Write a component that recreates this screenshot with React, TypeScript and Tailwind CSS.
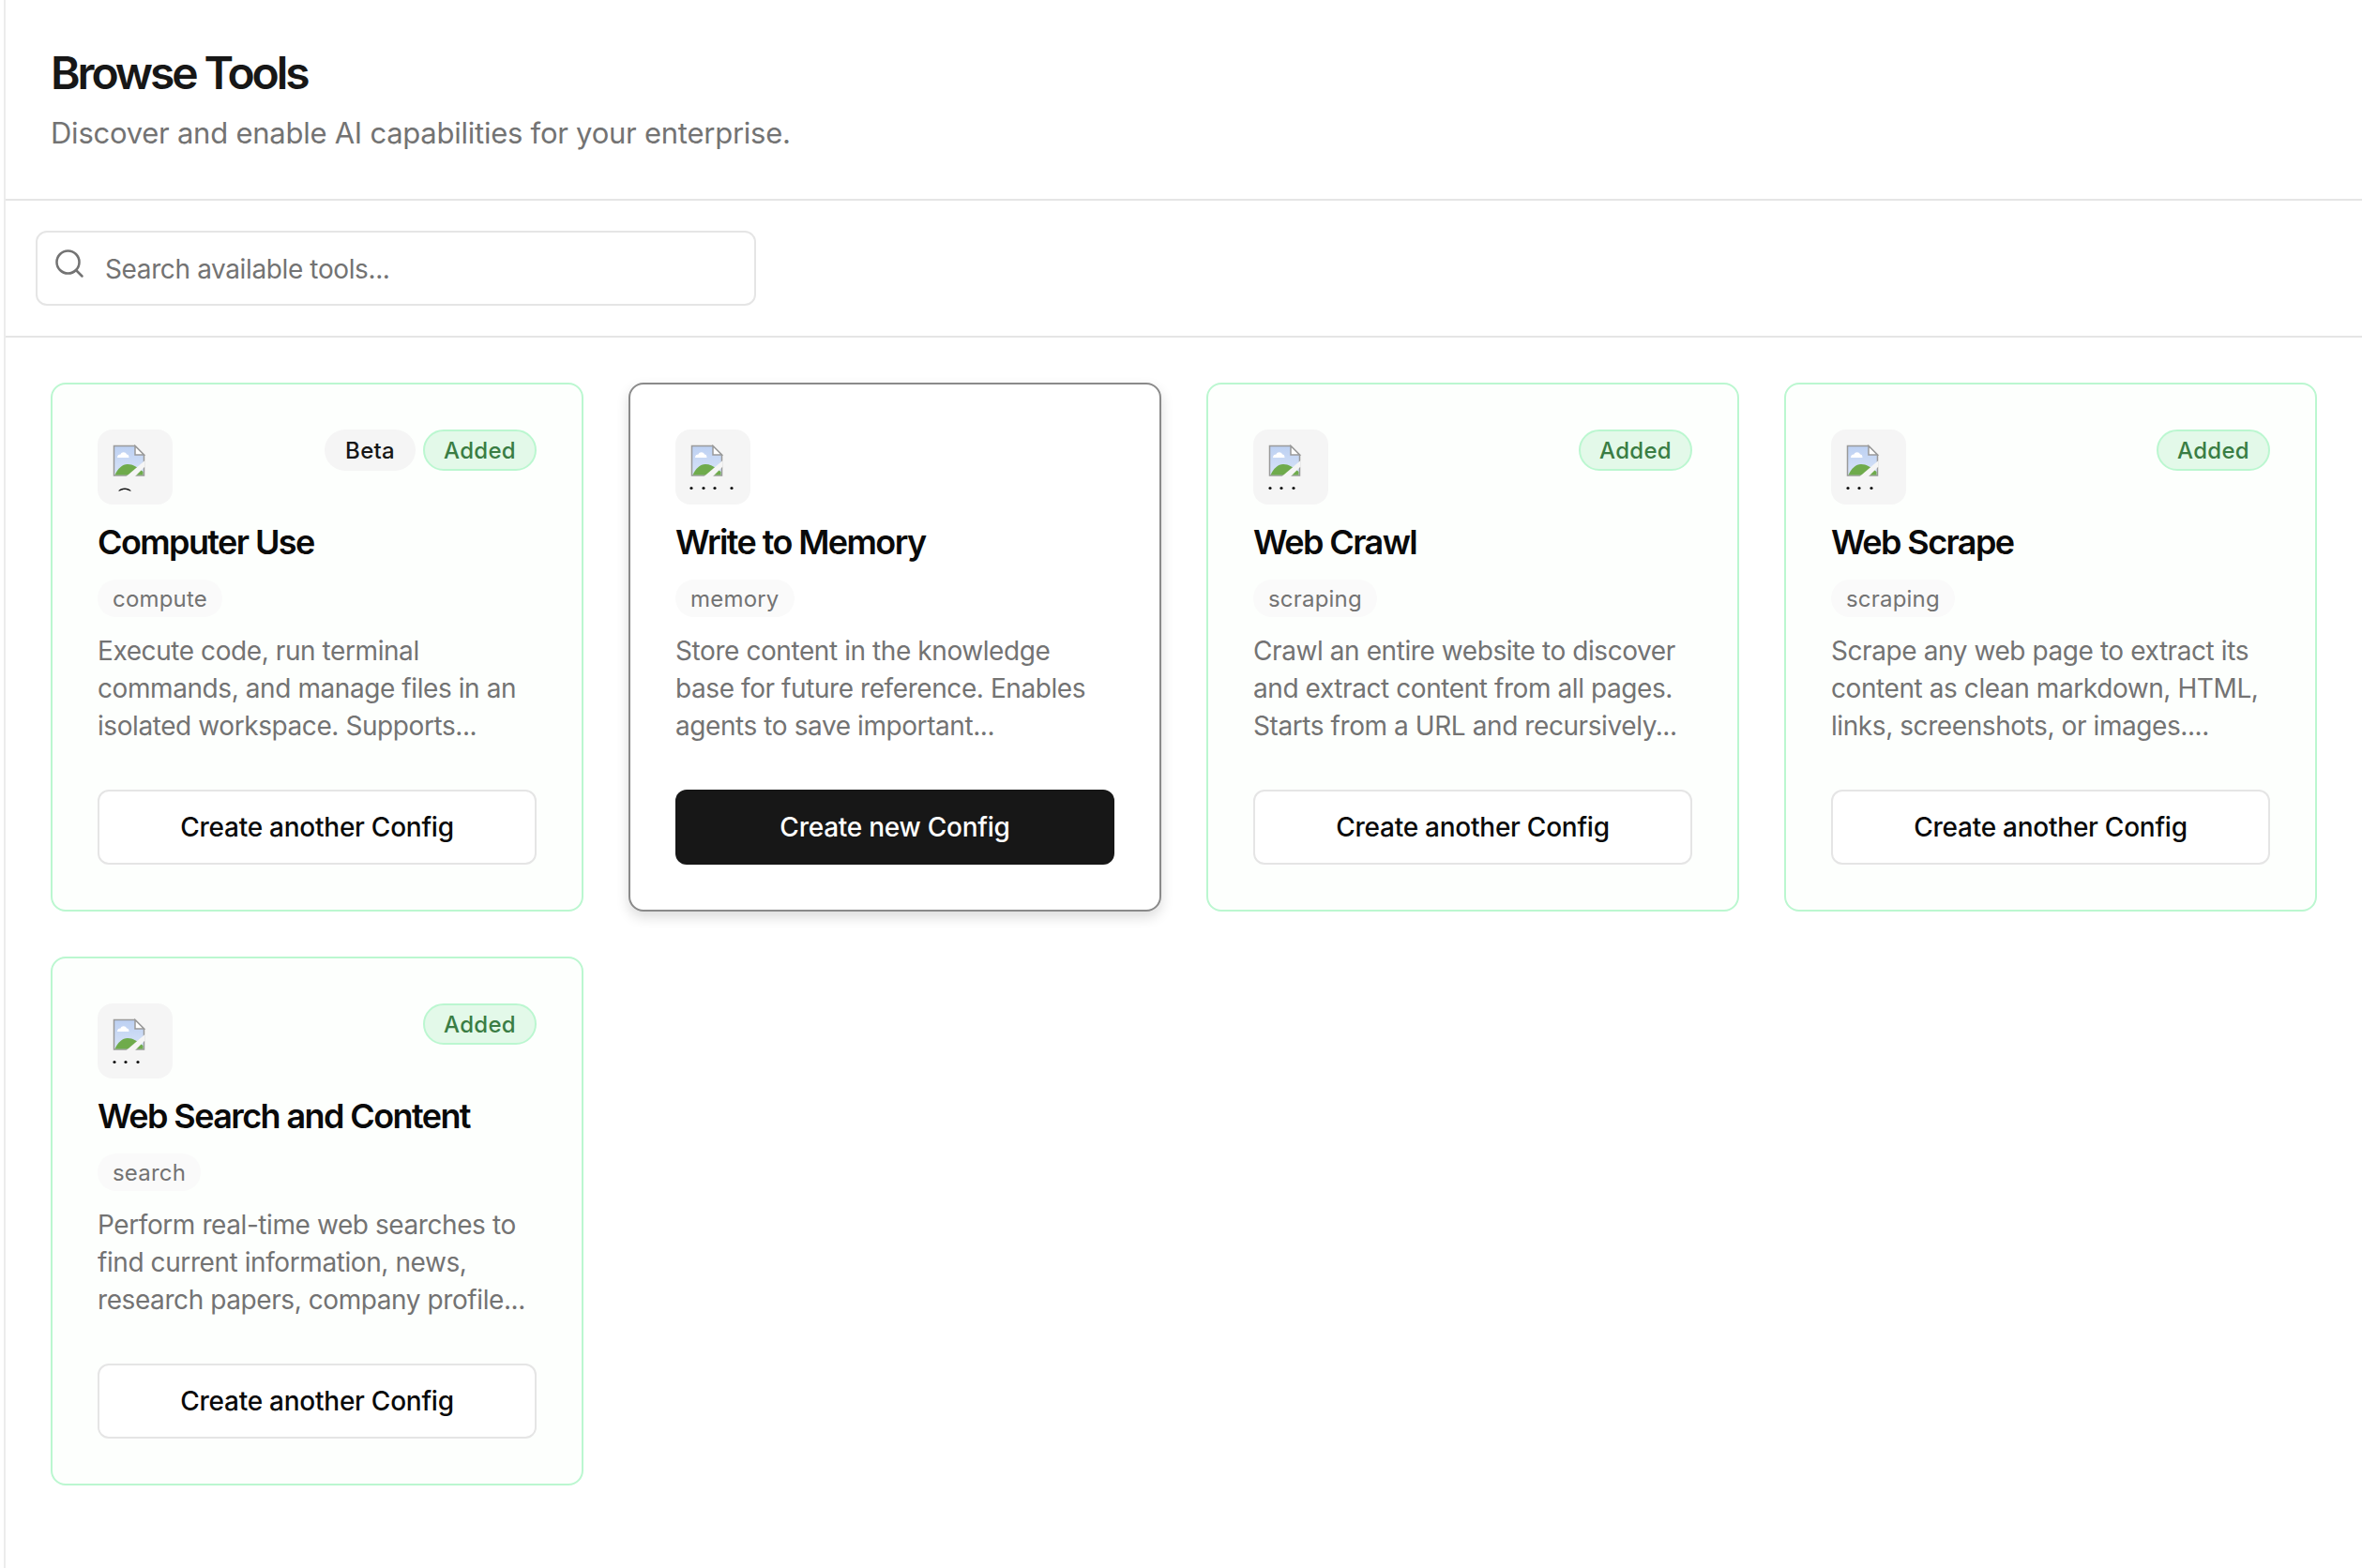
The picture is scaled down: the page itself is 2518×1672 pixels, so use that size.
import { Search } from "lucide-react";

const sans = "font-['Inter','Liberation_Sans',sans-serif]";

type Tool = {
  name: string;
  tag: string;
  description: string;
  beta?: boolean;
  added?: boolean;
  // x positions of what is left of the clipped alt text
  dots: number[];
  arc?: boolean;
};

const tools: Tool[] = [
  {
    name: "Computer Use",
    tag: "compute",
    description: "Execute code, run terminal commands, and manage files in an isolated workspace. Supports...",
    beta: true,
    added: true,
    dots: [],
    arc: true,
  },
  {
    name: "Write to Memory",
    tag: "memory",
    description: "Store content in the knowledge base for future reference. Enables agents to save important...",
    dots: [17, 30, 42, 60],
  },
  {
    name: "Web Crawl",
    tag: "scraping",
    description: "Crawl an entire website to discover and extract content from all pages. Starts from a URL and recursively...",
    added: true,
    dots: [18, 30, 43],
  },
  {
    name: "Web Scrape",
    tag: "scraping",
    description: "Scrape any web page to extract its content as clean markdown, HTML, links, screenshots, or images....",
    added: true,
    dots: [18, 30, 43],
  },
  {
    name: "Web Search and Content",
    tag: "search",
    description: "Perform real-time web searches to find current information, news, research papers, company profile...",
    added: true,
    dots: [18, 30, 43],
  },
];

function BrokenImage({ dots, arc }: { dots: number[]; arc?: boolean }) {
  return (
    <svg width="80" height="80" viewBox="0 0 80 80" className="block">
      <defs>
        <linearGradient id="sky" x1="0" y1="0" x2="0" y2="1">
          <stop offset="0" stopColor="#bcd0f2" />
          <stop offset="1" stopColor="#d9e4f8" />
        </linearGradient>
      </defs>
      <path d="M17.500 17.500h22.500l9.500 9.500v22h-32z" fill="url(#sky)" stroke="#9a9a9a" strokeWidth="1.500" />
      <path d="M40 17.500v9.500h9.500z" fill="#fff" stroke="#9a9a9a" strokeWidth="1.500" />
      <path d="M21 30c0-2.500 1.500-3.500 3.500-3.500 1-3 5.500-3 6.500 0 1.500 0 2.500 1 2.500 3.500z" fill="#fff" />
      <path d="M18.500 48.500c3-7 8-11.500 13.500-11.500 6 0 10 3 16.500 8v3.500z" fill="#6fab4c" />
      <path d="M50.500 33v6.500L39.500 50.500h-9.500z" fill="#f5f5f5" />
      {arc && <path d="M22 65.500c3-4 11-4 14 0l-2 0c-3-2-7-2-10 0z" fill="#111" />}
      {dots.map((x) => (
        <circle key={x} cx={x} cy="62.500" r="1.600" fill="#111" />
      ))}
    </svg>
  );
}

function ToolCard({ tool }: { tool: Tool }) {
  const cardTone = tool.added
    ? "border-[#bbf7d0] bg-[#fdfffd]"
    : "border-[#8a8a8a] bg-white shadow-[0_6px_14px_rgba(0,0,0,0.14)]";

  return (
    <div className={`rounded-2xl border-2 p-12 ${cardTone}`}>
      <div className="flex items-start justify-between">
        <div className="size-20 overflow-hidden rounded-2xl bg-[#f5f5f5]">
          <BrokenImage dots={tool.dots} arc={tool.arc} />
        </div>
        <div className="flex gap-2">
          {tool.beta && (
            <span className="rounded-full border-2 border-transparent bg-[#f5f5f5] px-5 pt-[5px] pb-[3px] text-2xl leading-8 font-medium tracking-[0.3px] text-[#171717]">
              Beta
            </span>
          )}
          {tool.added && (
            <span className="rounded-full border-2 border-[#bbf7d0] bg-[#e3f9e9] px-5 pt-[5px] pb-[3px] text-2xl leading-8 font-medium tracking-[0.3px] text-[#3a7d44]">
              Added
            </span>
          )}
        </div>
      </div>
      <h3 className="mt-3 text-4xl leading-14 font-semibold tracking-[-1.6px] text-[#0a0a0a]">{tool.name}</h3>
      <div className="mt-3 flex">
        <span className="rounded-full bg-[#fafafa] px-4 pt-[5px] pb-[3px] text-2xl leading-8 tracking-[0.2px] text-[#737373]">
          {tool.tag}
        </span>
      </div>
      <p className="mt-4 line-clamp-3 h-[120px] text-[28px] leading-10 tracking-[-0.42px] text-[#737373]">
        {tool.description}
      </p>
      <button
        className={
          tool.added
            ? "mt-12 flex h-20 w-full items-center justify-center rounded-xl border-2 border-[#e5e5e5] bg-white text-[28px] font-medium tracking-[-0.25px] text-[#0a0a0a]"
            : "mt-12 flex h-20 w-full items-center justify-center rounded-xl bg-[#171717] text-[28px] font-medium tracking-[-0.25px] text-white"
        }
      >
        {tool.added ? "Create another Config" : "Create new Config"}
      </button>
    </div>
  );
}

export default function App() {
  return (
    <div className={`ml-1 min-h-[1672px] border-l-2 border-[#ececec] bg-white ${sans}`}>
      <header className="border-b-2 border-[#e5e5e5] px-12 pt-[50px] pb-[46px]">
        <h1 className="text-5xl leading-14 font-semibold tracking-[-3.1px] text-[#171717]">Browse Tools</h1>
        <p className="mt-3 text-[31px] leading-12 tracking-[-0.25px] text-[#737373]">
          Discover and enable AI capabilities for your enterprise.
        </p>
      </header>
      <div className="border-b-2 border-[#e5e5e5] px-8 py-8">
        <div className="relative w-[768px]">
          <Search size={36} strokeWidth={1.7} className="absolute top-[17px] left-[18px] text-[#737373]" />
          <input
            placeholder="Search available tools..."
            className="h-20 w-full rounded-xl border-2 border-[#e5e5e5] bg-white pt-[2px] pl-[72px] text-[28px] tracking-[-0.38px] placeholder:text-[#737373]"
          />
        </div>
      </div>
      <div className="grid grid-cols-4 gap-12 p-12">
        {tools.map((tool) => (
          <ToolCard key={tool.name} tool={tool} />
        ))}
      </div>
    </div>
  );
}
